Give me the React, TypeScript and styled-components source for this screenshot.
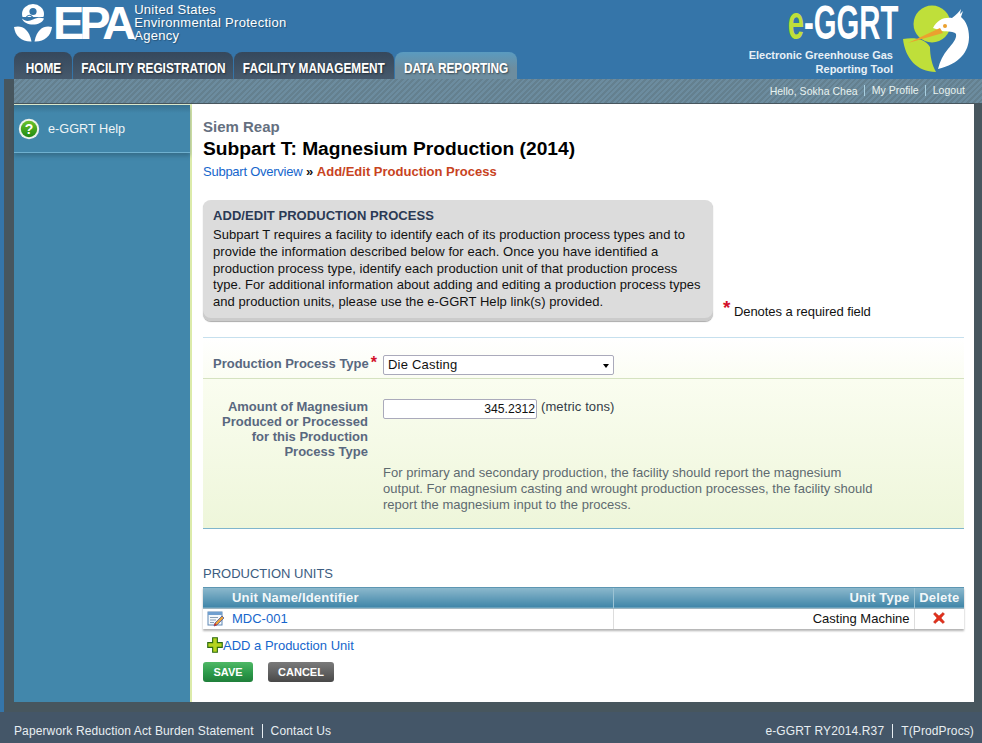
import styled, { createGlobalStyle } from 'styled-components';

const GlobalStyle = createGlobalStyle`
  html, body {
    margin: 0;
    padding: 0;
    background: #3575a9;
  }
  #root {
    min-height: 100vh;
  }
  * {
    box-sizing: border-box;
  }
`;

const tabs = [
  { label: 'HOME', width: 58 },
  { label: 'FACILITY REGISTRATION', width: 160 },
  { label: 'FACILITY MANAGEMENT', width: 160 },
  { label: 'DATA REPORTING', width: 122, active: true },
];

const EpaMark = () => (
  <svg width="38" height="38" viewBox="0 0 38 38">
    <path d="M8 10a11 10 0 0 1 22 0c0 1-.2 2-.6 3H8.600C8.200 12 8 11 8 10z" fill="#fff" />
    <circle cx="19" cy="7.500" r="3.600" fill="#3575a9" />
    <path d="M12 13.500c2-3 4.500-3 7 0s5 3 7 0" fill="none" stroke="#3575a9" strokeWidth="1.200" />
    <path d="M8 14.500c3 3 7 3 11 1s8-2 11-1c-1.500 4-6 6-11 6s-9.500-2-11-6z" fill="#fff" />
    <path d="M0 23c7-2 15 1 17.500 14.500C8 38 1 32 0 23z" fill="#fff" />
    <path d="M38 23c-7-2-15 1-17.500 14.500C30 38 37 32 38 23z" fill="#fff" />
  </svg>
);

const HeronLogo = () => (
  <svg width="72" height="72" viewBox="0 0 72 72">
    <circle cx="30" cy="20" r="18.500" fill="#bfdf3a" />
    <path d="M1 35c12-2 22 0 27 8 0 9 2 18 6 25C15 68 3 54 1 35z" fill="#bfdf3a" />
    <path d="M31 24c4-8 11-11 19-10 4-3 7-6 9-9l-1 5 3-3-2 6c5 4 8 11 8 20 0 15-10 27-31 32 2-8 5-14 10-20 4-5 9-10 8-15-2-3-8-2-14-3z" fill="#fff" />
    <path d="M6 39l32-15 3 5z" fill="#eba02f" />
    <circle cx="43" cy="22" r="2" fill="#eba02f" />
  </svg>
);

const HelpIcon = () => (
  <svg width="22" height="22" viewBox="0 0 22 22">
    <defs>
      <linearGradient id="helpFill" x1="0" y1="0" x2="0" y2="1">
        <stop offset="0" stopColor="#6cc22c" />
        <stop offset="1" stopColor="#1f8a12" />
      </linearGradient>
    </defs>
    <circle cx="11" cy="11" r="10.200" fill="#eef3ee" />
    <circle cx="11" cy="11" r="8.200" fill="url(#helpFill)" />
    <text x="11" y="16" textAnchor="middle" fontFamily="Liberation Sans" fontWeight="700" fontSize="14" fill="#fff">?</text>
  </svg>
);

const EditIcon = () => (
  <svg width="18" height="18" viewBox="0 0 18 18">
    <rect x="1" y="2" width="14" height="13" fill="#f4f8fc" stroke="#5f87b4" />
    <rect x="1" y="2" width="14" height="3" fill="#6f9fd0" />
    <path d="M3 7.500h8M3 10h6M3 12.500h4" stroke="#8aa0b5" />
    <path d="M7 16l1-3 7-7 2 2-7 7z" fill="#e8a23a" stroke="#3e4f9c" strokeWidth=".7" />
    <path d="M7 16l1-3 2 2z" fill="#d52b1e" />
  </svg>
);

const DeleteIcon = () => (
  <svg width="12" height="12" viewBox="0 0 12 12">
    <path d="M2 .5 6 4l4-3.500L11.500 2 8 6l3.500 4-1.500 1.500L6 8l-4 3.500L.5 10 4 6 .5 2z" fill="#e3301c" stroke="#b9200f" strokeWidth=".5" />
  </svg>
);

const PlusIcon = () => (
  <svg width="16" height="16" viewBox="0 0 17 17">
    <path d="M6 .8h5V6h5.200v5H11v5.200H6V11H.8V6H6z" fill="#b5d41f" stroke="#2c6b12" strokeWidth="1.200" />
  </svg>
);

export default function App() {
  return (
    <>
      <GlobalStyle />
      <Page>
        <Header>
          <HeaderLeft>
            <EpaLogo>
              <EpaMark />
              <EpaLetters>EPA</EpaLetters>
              <EpaName>
                United States
                <br />
                Environmental Protection
                <br />
                Agency
              </EpaName>
            </EpaLogo>
            <TabBar>
              {tabs.map((tab) => (
                <Tab key={tab.label} $width={tab.width} $active={tab.active}>
                  <TabLabel>{tab.label}</TabLabel>
                </Tab>
              ))}
            </TabBar>
          </HeaderLeft>
          <ToolLogo>
            <ToolText>
              <ToolTitle>
                <ToolLetters>
                  <ToolE>e</ToolE>-GGRT
                </ToolLetters>
              </ToolTitle>
              <ToolTagline>
                Electronic Greenhouse Gas
                <br />
                Reporting Tool
              </ToolTagline>
            </ToolText>
            <HeronLogo />
          </ToolLogo>
        </Header>

        <Shell>
          <UserBar>
            <UserItem>Hello, Sokha Chea</UserItem>
            <UserItem>My Profile</UserItem>
            <UserItem>Logout</UserItem>
          </UserBar>
          <Columns>
            <Sidebar>
              <SideItem>
                <HelpIcon />
                e-GGRT Help
              </SideItem>
            </Sidebar>
            <Content>
              <Facility>Siem Reap</Facility>
              <Title>Subpart T: Magnesium Production (2014)</Title>
              <Crumbs>
                <OverviewLink>Subpart Overview</OverviewLink> <b>»</b> <Current>Add/Edit Production Process</Current>
              </Crumbs>

              <IntroRow>
                <IntroBox>
                  <IntroHeading>ADD/EDIT PRODUCTION PROCESS</IntroHeading>
                  Subpart T requires a facility to identify each of its production process types and to
                  provide the information described below for each. Once you have identified a
                  production process type, identify each production unit of that production process
                  type. For additional information about adding and editing a production process types
                  and production units, please use the e-GGRT Help link(s) provided.
                </IntroBox>
                <RequiredNote>
                  <NoteStar>*</NoteStar> Denotes a required field
                </RequiredNote>
              </IntroRow>

              <TypeRow>
                <FieldLabel>
                  Production Process Type<LabelStar>*</LabelStar>
                </FieldLabel>
                <SelectWrap>
                  <TypeSelect defaultValue="Die Casting">
                    <option>Die Casting</option>
                  </TypeSelect>
                </SelectWrap>
              </TypeRow>

              <AmountPanel>
                <FieldLabel>
                  Amount of Magnesium
                  <br />
                  Produced or Processed
                  <br />
                  for this Production
                  <br />
                  Process Type
                </FieldLabel>
                <AmountBody>
                  <AmountLine>
                    <AmountInput defaultValue="345.2312" />
                    (metric tons)
                  </AmountLine>
                  <AmountHelp>
                    For primary and secondary production, the facility should report the magnesium
                    output. For magnesium casting and wrought production processes, the facility should
                    report the magnesium input to the process.
                  </AmountHelp>
                </AmountBody>
              </AmountPanel>

              <SectionTitle>PRODUCTION UNITS</SectionTitle>
              <UnitsTable>
                <colgroup>
                  <col width="410" />
                  <col width="301" />
                  <col width="50" />
                </colgroup>
                <thead>
                  <tr>
                    <HeadCell $indent>Unit Name/Identifier</HeadCell>
                    <HeadCell $align="right">Unit Type</HeadCell>
                    <HeadCell $align="center">Delete</HeadCell>
                  </tr>
                </thead>
                <tbody>
                  <tr>
                    <BodyCell>
                      <NameCell>
                        <EditIcon />
                        <Link>MDC-001</Link>
                      </NameCell>
                    </BodyCell>
                    <BodyCell $align="right">Casting Machine</BodyCell>
                    <BodyCell $align="center">
                      <DeleteIcon />
                    </BodyCell>
                  </tr>
                </tbody>
              </UnitsTable>

              <AddLine>
                <PlusIcon />
                <Link>ADD a Production Unit</Link>
              </AddLine>

              <Buttons>
                <SaveButton>SAVE</SaveButton>
                <CancelButton>CANCEL</CancelButton>
              </Buttons>
            </Content>
          </Columns>
        </Shell>

        <Footer>
          <FooterGroup>
            <FooterItem>Paperwork Reduction Act Burden Statement</FooterItem>
            <FooterItem>Contact Us</FooterItem>
          </FooterGroup>
          <FooterGroup>
            <FooterItem>e-GGRT RY2014.R37</FooterItem>
            <FooterItem>T(ProdProcs)</FooterItem>
          </FooterGroup>
        </Footer>
      </Page>
    </>
  );
}

const Page = styled.div`
  display: flex;
  flex-direction: column;
  min-height: 743px;
  font-family: 'Liberation Sans', Arial, sans-serif;
  font-size: 13px;
  color: #111;
`;

const Header = styled.header`
  display: flex;
  justify-content: space-between;
  height: 79px;
  padding: 0 8px 0 14px;
  background: #3575a9;
`;

const HeaderLeft = styled.div`
  display: flex;
  flex-direction: column;
  justify-content: space-between;
`;

const EpaLogo = styled.div`
  display: flex;
  align-items: flex-start;
  height: 52px;
  padding-top: 4px;
  color: #fff;
`;

const EpaLetters = styled.div`
  margin: -8px 0 0 1px;
  font-size: 47px;
  font-weight: 700;
  line-height: 54px;
  letter-spacing: -5px;
`;

const EpaName = styled.div`
  margin: -1px 0 0 3px;
  font-size: 13px;
  line-height: 13px;
  letter-spacing: 0.3px;
  text-shadow: 1px 1px 1px rgba(0, 0, 0, 0.3);
`;

const TabBar = styled.nav`
  display: flex;
  gap: 1px;
`;

const Tab = styled.div<{ $width: number; $active?: boolean }>`
  display: flex;
  justify-content: center;
  width: ${({ $width }) => $width}px;
  height: 27px;
  border-radius: 8px 8px 0 0;
  background: ${({ $active }) =>
    $active ? 'linear-gradient(#5a9bc0, #6d8d9f 60%)' : 'linear-gradient(#35485c, #46596c)'};
  color: #fff;
  font-size: 15px;
  font-weight: 700;
  line-height: 31px;
  white-space: nowrap;
  text-shadow: 1px 1px 2px rgba(0, 0, 0, 0.5);
`;

const TabLabel = styled.span`
  flex: none;
  display: inline-block;
  transform: scaleX(0.79);
`;

const ToolLogo = styled.div`
  display: flex;
  align-items: flex-start;
  padding-top: 4px;
`;

const ToolText = styled.div`
  display: flex;
  flex-direction: column;
  align-items: flex-end;
  margin-right: 9px;
  color: #fff;
`;

const ToolTitle = styled.div`
  display: flex;
  justify-content: flex-end;
  align-items: center;
  height: 38px;
  width: 110px;
  margin-right: -5px;
`;

const ToolE = styled.span`
  color: #bfdf3a;
`;

const ToolLetters = styled.span`
  flex: none;
  display: inline-block;
  font-size: 48px;
  font-weight: 700;
  line-height: 56px;
  transform: scaleX(0.61);
  transform-origin: right;
  white-space: nowrap;
`;

const ToolTagline = styled.div`
  margin-top: 6px;
  font-size: 11px;
  font-weight: 700;
  line-height: 14px;
  text-align: right;
  color: #e8f0f6;
`;

const Shell = styled.div`
  display: flex;
  flex: 1;
  flex-direction: column;
  margin-left: 4px;
  padding: 0 8px 10px 10px;
  background: #47565e;
`;

const UserBar = styled.div`
  display: flex;
  justify-content: flex-end;
  align-items: center;
  height: 25px;
  margin-right: -8px;
  padding: 0 17px 1px 0;
  background: repeating-linear-gradient(135deg, #6c8c9f 0 2px, #64808f 2px 4px);
  border-bottom: 1px solid #47565e;
`;

const UserItem = styled.span`
  font-size: 10.500px;
  letter-spacing: 0.03px;
  color: #e8f3f0;

  & + & {
    margin-left: 6px;
    padding-left: 7px;
    border-left: 1px solid #a9d0e0;
    line-height: 11px;
  }
`;

const Columns = styled.div`
  display: flex;
  flex: 1;
`;

const Sidebar = styled.aside`
  width: 178px;
  border-top: 1px solid #dfeccf;
  border-right: 2px solid #dcebaa;
  background: #4287ab;
`;

const SideItem = styled.div`
  display: flex;
  align-items: center;
  gap: 8px;
  height: 48px;
  padding: 0 0 0 4px;
  border-bottom: 1px solid #6fb0cf;
  background: linear-gradient(#38718f, #4287ab 8px);
  box-shadow: 0 3px 4px rgba(40, 80, 100, 0.45);
  color: #eef4f6;
  font-size: 12.700px;
`;

const Content = styled.main`
  flex: 1;
  padding: 15px 10px 0 11px;
  background: #fff;
`;

const Facility = styled.div`
  font-size: 15px;
  font-weight: 700;
  line-height: 16px;
  color: #65707f;
`;

const Title = styled.h1`
  margin: 1px 0 0;
  font-size: 19.200px;
  font-weight: 700;
  line-height: 26px;
  color: #000;
`;

const Crumbs = styled.div`
  margin-top: 2px;
  line-height: 15px;
`;

const Link = styled.a`
  color: #1666cc;
  font-size: 13px;
`;

const OverviewLink = styled(Link)`
  letter-spacing: -0.25px;
`;

const Current = styled.b`
  color: #c8431e;
`;

const IntroRow = styled.div`
  display: flex;
  align-items: flex-end;
  padding-bottom: 16px;
  margin-top: 21px;
  border-bottom: 1px solid #c6e0ee;
`;

const IntroBox = styled.div`
  width: 510px;
  padding: 7px 8px 10px 10px;
  border-radius: 8px;
  background: #dcdcdc;
  box-shadow: inset 0 -3px 0 #cbcbcb, 0 1px 1px #aaa;
  line-height: 16.750px;
  letter-spacing: 0.05px;
  color: #111;
`;

const IntroHeading = styled.div`
  margin-bottom: 3px;
  font-weight: 700;
  font-size: 13px;
  line-height: 17px;
  color: #2b3a55;
`;

const RequiredNote = styled.div`
  margin-left: 10px;
  line-height: 18px;
  letter-spacing: -0.05px;
`;

const Star = styled.span`
  color: #d3102a;
  font-weight: 700;
  font-size: 16px;
`;

const LabelStar = styled(Star)`
  margin: 0 -9px 0 2px;
`;

const NoteStar = styled(Star)`
  font-size: 19px;
  vertical-align: 2px;
`;

const TypeRow = styled.div`
  display: flex;
  gap: 15px;
  height: 41px;
  padding-top: 17px;
  border-bottom: 1px solid #d5e2c0;
  background: linear-gradient(#fff, #fbfdf3);
`;

const FieldLabel = styled.div`
  flex: none;
  width: 165px;
  text-align: right;
  font-weight: 700;
  font-size: 13px;
  line-height: 15px;
  color: #59687f;
  white-space: nowrap;
`;

const SelectWrap = styled.div`
  position: relative;
  width: 231px;
  height: 20px;

  &::after {
    content: '';
    position: absolute;
    top: 9px;
    right: 5px;
    border-style: solid;
    border-color: #000 transparent transparent;
    border-width: 4px 3.500px 0;
  }
`;

const TypeSelect = styled.select`
  appearance: none;
  width: 100%;
  height: 100%;
  padding: 0 4px;
  border: 1px solid #aab;
  border-radius: 2px;
  background: #fff;
  font-family: inherit;
  font-size: 13px;
  letter-spacing: 0.2px;
  color: #111;
`;

const AmountPanel = styled.div`
  display: flex;
  gap: 15px;
  height: 150px;
  padding-top: 20px;
  border-bottom: 1px solid #7fb5cc;
  background: linear-gradient(#fafdf0, #eef6da);
`;

const AmountBody = styled.div`
  flex: none;
  width: 500px;
`;

const AmountLine = styled.div`
  display: flex;
  align-items: flex-start;
  gap: 4px;
  line-height: 16px;
  letter-spacing: 0.1px;
  color: #333c48;
`;

const AmountInput = styled.input`
  width: 154px;
  height: 20px;
  padding: 0 1px;
  border: 1px solid #aab;
  border-radius: 2px;
  background: #fff;
  font-family: inherit;
  font-size: 12.200px;
  text-align: right;
  color: #111;
`;

const AmountHelp = styled.p`
  margin: 46px 0 0;
  line-height: 16px;
  letter-spacing: 0.02px;
  color: #5e6a70;
`;

const SectionTitle = styled.h2`
  margin: 37px 0 6px;
  font-size: 13px;
  font-weight: 400;
  line-height: 15px;
  color: #3c5c80;
`;

const UnitsTable = styled.table`
  width: 761px;
  border-collapse: collapse;
  table-layout: fixed;
  box-shadow: 0 2px 2px rgba(0, 0, 0, 0.3);
`;

const HeadCell = styled.th<{ $align?: string; $indent?: boolean }>`
  height: 21px;
  padding: 0 4px 0 ${({ $indent }) => ($indent ? '29px' : '4px')};
  border-left: 1px solid #9cc3d4;
  border-top: 1px solid #5d96b2;
  border-bottom: 1px solid #9db5c0;
  background: linear-gradient(#8db9cd, #3f85a8);
  color: #f2f7f9;
  font-size: 13px;
  font-weight: 700;
  letter-spacing: 0.2px;
  text-align: ${({ $align }) => $align || 'left'};
  &:first-child {
    border-left: 0;
  }
`;

const BodyCell = styled.td<{ $align?: string }>`
  height: 21px;
  padding: 0 4px;
  border-left: 1px solid #ddd;
  background: #fff;
  text-align: ${({ $align }) => $align || 'left'};
  line-height: 12px;
  &:first-child {
    border-left: 0;
  }
`;

const NameCell = styled.div`
  display: flex;
  align-items: center;
  gap: 7px;
`;

const AddLine = styled.div`
  display: flex;
  align-items: flex-end;
  height: 17px;
  margin-top: 7px;
  padding-left: 4px;
  line-height: 14px;
`;

const Buttons = styled.div`
  display: flex;
  gap: 15px;
  margin-top: 9px;
`;

const SaveButton = styled.button`
  height: 20px;
  width: 50px;
  padding: 0;
  border: 0;
  border-radius: 3px;
  background: linear-gradient(#4fb866, #2c9a4a 55%, #1f7f3a);
  color: #fff;
  font-family: inherit;
  font-size: 11px;
  font-weight: 700;
`;

const CancelButton = styled(SaveButton)`
  width: 66px;
  background: linear-gradient(#7a7a7a, #606060 55%, #484848);
`;

const Footer = styled.footer`
  display: flex;
  justify-content: space-between;
  align-items: center;
  height: 31px;
  padding: 7px 8px 0 14px;
  background: #445668;
`;

const FooterGroup = styled.div`
  display: flex;
  align-items: center;
`;

const FooterItem = styled.span`
  color: #e8eef2;
  font-size: 12px;
  line-height: 14px;
  letter-spacing: 0.12px;

  & + & {
    margin-left: 8px;
    padding-left: 8px;
    border-left: 1px solid #e8eef2;
  }
`;
